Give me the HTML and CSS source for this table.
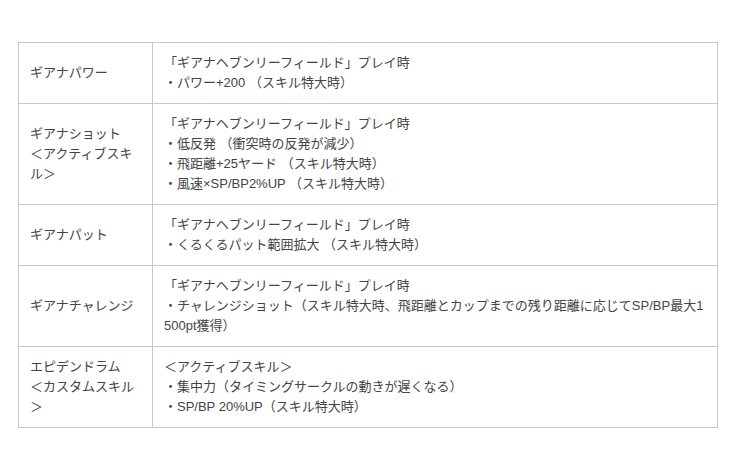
FILE: index.html
```html
<!DOCTYPE html>
<html lang="ja">
<head>
<meta charset="utf-8">
<link rel="stylesheet" href="styles.css">
</head>
<body>
<table class="skills">
  <tr>
    <th class="name">ギアナパワー</th>
    <td class="desc">「ギアナヘブンリーフィールド」プレイ時<br>・パワー+200 （スキル特大時）</td>
  </tr>
  <tr>
    <th class="name">ギアナショット<br>＜アクティブスキル＞</th>
    <td class="desc">「ギアナヘブンリーフィールド」プレイ時<br>・低反発 （衝突時の反発が減少）<br>・飛距離+25ヤード （スキル特大時）<br>・風速×SP/BP2%UP （スキル特大時）</td>
  </tr>
  <tr>
    <th class="name">ギアナパット</th>
    <td class="desc">「ギアナヘブンリーフィールド」プレイ時<br>・くるくるパット範囲拡大 （スキル特大時）</td>
  </tr>
  <tr>
    <th class="name">ギアナチャレンジ</th>
    <td class="desc">「ギアナヘブンリーフィールド」プレイ時<br>・チャレンジショット（スキル特大時、飛距離とカップまでの残り距離に応じてSP/BP最大1500pt獲得）</td>
  </tr>
  <tr>
    <th class="name">エピデンドラム<br>＜カスタムスキル＞</th>
    <td class="desc">＜アクティブスキル＞<br>・集中力（タイミングサークルの動きが遅くなる）<br>・SP/BP 20%UP（スキル特大時）</td>
  </tr>
</table>
</body>
</html>
```

FILE: styles.css
```css
html, body {
  margin: 0;
  padding: 0;
  background: #ffffff;
}
body {
  padding: 42px 22px 0 18px;
  font-family: "Liberation Sans", "Noto Sans CJK JP", sans-serif;
  font-size: 13px;
  line-height: 20px;
  color: #444444;
}
.skills {
  width: 700px;
  border-collapse: collapse;
  table-layout: fixed;
}
.name, .desc {
  border: 1px solid #c9c9c9;
  padding: 10px 11px 10px 11px;
  vertical-align: middle;
  text-align: left;
  font-weight: normal;
  word-break: break-all;
}
.name {
  width: 111px;
}
```
